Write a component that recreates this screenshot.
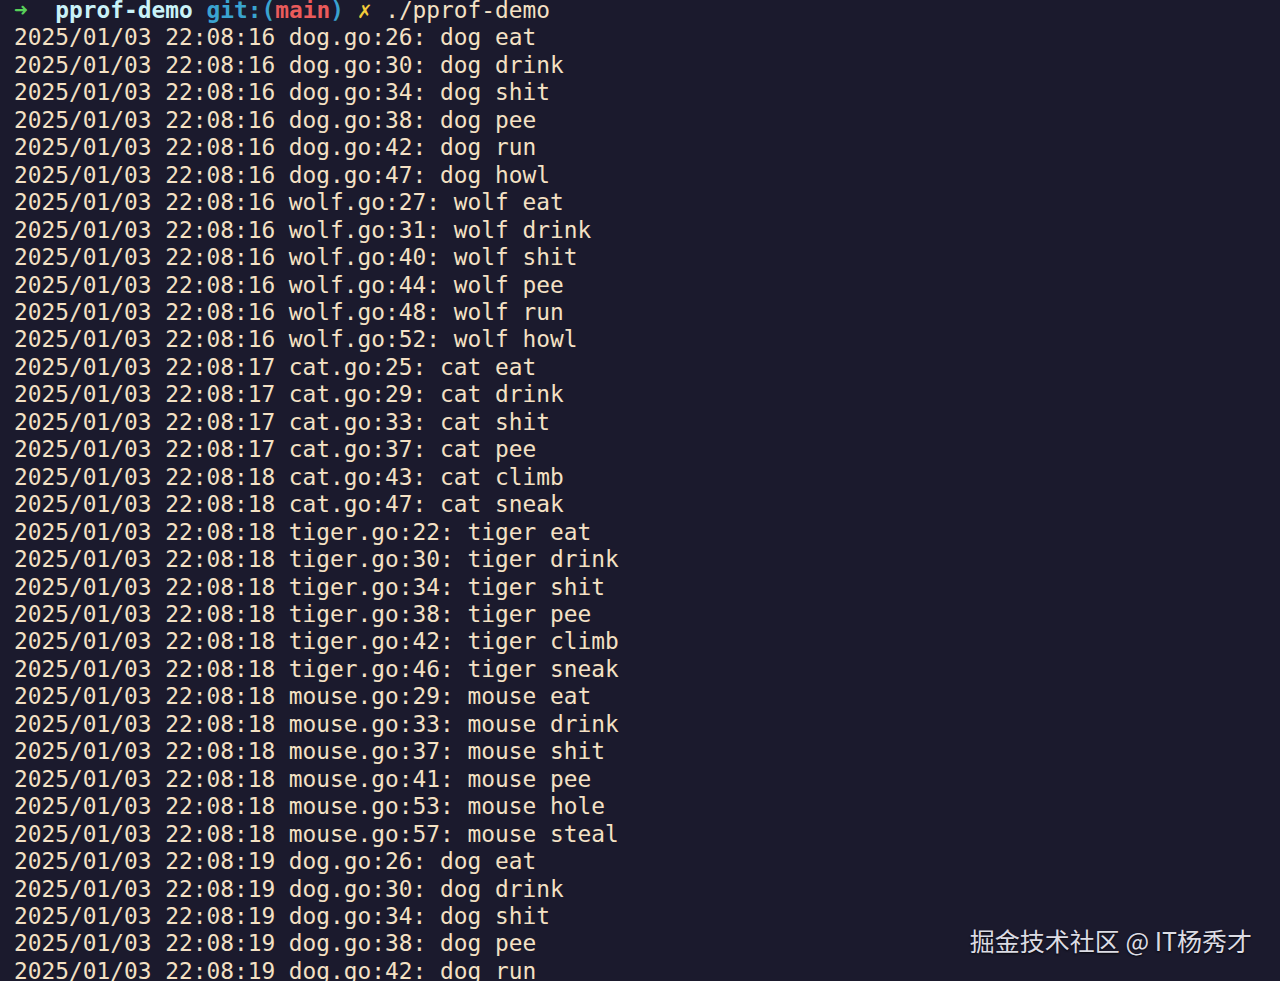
import React from "react";

const rows: [string, string, string][] = [
  ["16", "dog.go:26", "dog eat"],
  ["16", "dog.go:30", "dog drink"],
  ["16", "dog.go:34", "dog shit"],
  ["16", "dog.go:38", "dog pee"],
  ["16", "dog.go:42", "dog run"],
  ["16", "dog.go:47", "dog howl"],
  ["16", "wolf.go:27", "wolf eat"],
  ["16", "wolf.go:31", "wolf drink"],
  ["16", "wolf.go:40", "wolf shit"],
  ["16", "wolf.go:44", "wolf pee"],
  ["16", "wolf.go:48", "wolf run"],
  ["16", "wolf.go:52", "wolf howl"],
  ["17", "cat.go:25", "cat eat"],
  ["17", "cat.go:29", "cat drink"],
  ["17", "cat.go:33", "cat shit"],
  ["17", "cat.go:37", "cat pee"],
  ["18", "cat.go:43", "cat climb"],
  ["18", "cat.go:47", "cat sneak"],
  ["18", "tiger.go:22", "tiger eat"],
  ["18", "tiger.go:30", "tiger drink"],
  ["18", "tiger.go:34", "tiger shit"],
  ["18", "tiger.go:38", "tiger pee"],
  ["18", "tiger.go:42", "tiger climb"],
  ["18", "tiger.go:46", "tiger sneak"],
  ["18", "mouse.go:29", "mouse eat"],
  ["18", "mouse.go:33", "mouse drink"],
  ["18", "mouse.go:37", "mouse shit"],
  ["18", "mouse.go:41", "mouse pee"],
  ["18", "mouse.go:53", "mouse hole"],
  ["18", "mouse.go:57", "mouse steal"],
  ["19", "dog.go:26", "dog eat"],
  ["19", "dog.go:30", "dog drink"],
  ["19", "dog.go:34", "dog shit"],
  ["19", "dog.go:38", "dog pee"],
  ["19", "dog.go:42", "dog run"],
];

export default function App() {
  return (
    <div className="relative h-[981px] w-[1280px] overflow-hidden bg-[#1b1a2d]">
      <div
        className="-mt-[3px] pl-[14px] text-[22.84px] leading-[27.45px] text-[#f4e1c4] whitespace-pre"
        style={{ fontFamily: '"DejaVu Sans Mono", "Liberation Mono", monospace' }}
      >
        <div>
          <span className="text-[#58d15a] font-bold">➜</span>
          {"  "}
          <span className="font-bold text-[#c9f2f8]">pprof-demo</span>{" "}
          <span className="font-bold text-[#3aa3d0]">git:(</span>
          <span className="font-bold text-[#ea5b5b]">main</span>
          <span className="font-bold text-[#3aa3d0]">)</span>{" "}
          <span className="font-bold text-[#f2cb3a]">✗</span> ./pprof-demo
        </div>
        {rows.map(([s, f, m], i) => (
          <div key={i}>{`2025/01/03 22:08:${s} ${f}: ${m}`}</div>
        ))}
      </div>
      <div
        className="absolute right-[28px] bottom-[26px] text-[25px] leading-[30px] text-[#dcdce4] [text-shadow:0_1px_2px_rgba(0,0,0,0.8)]"
        style={{ fontFamily: '"Noto Sans CJK SC", "Noto Sans", sans-serif' }}
      >
        掘金技术社区 @ IT杨秀才
      </div>
    </div>
  );
}
